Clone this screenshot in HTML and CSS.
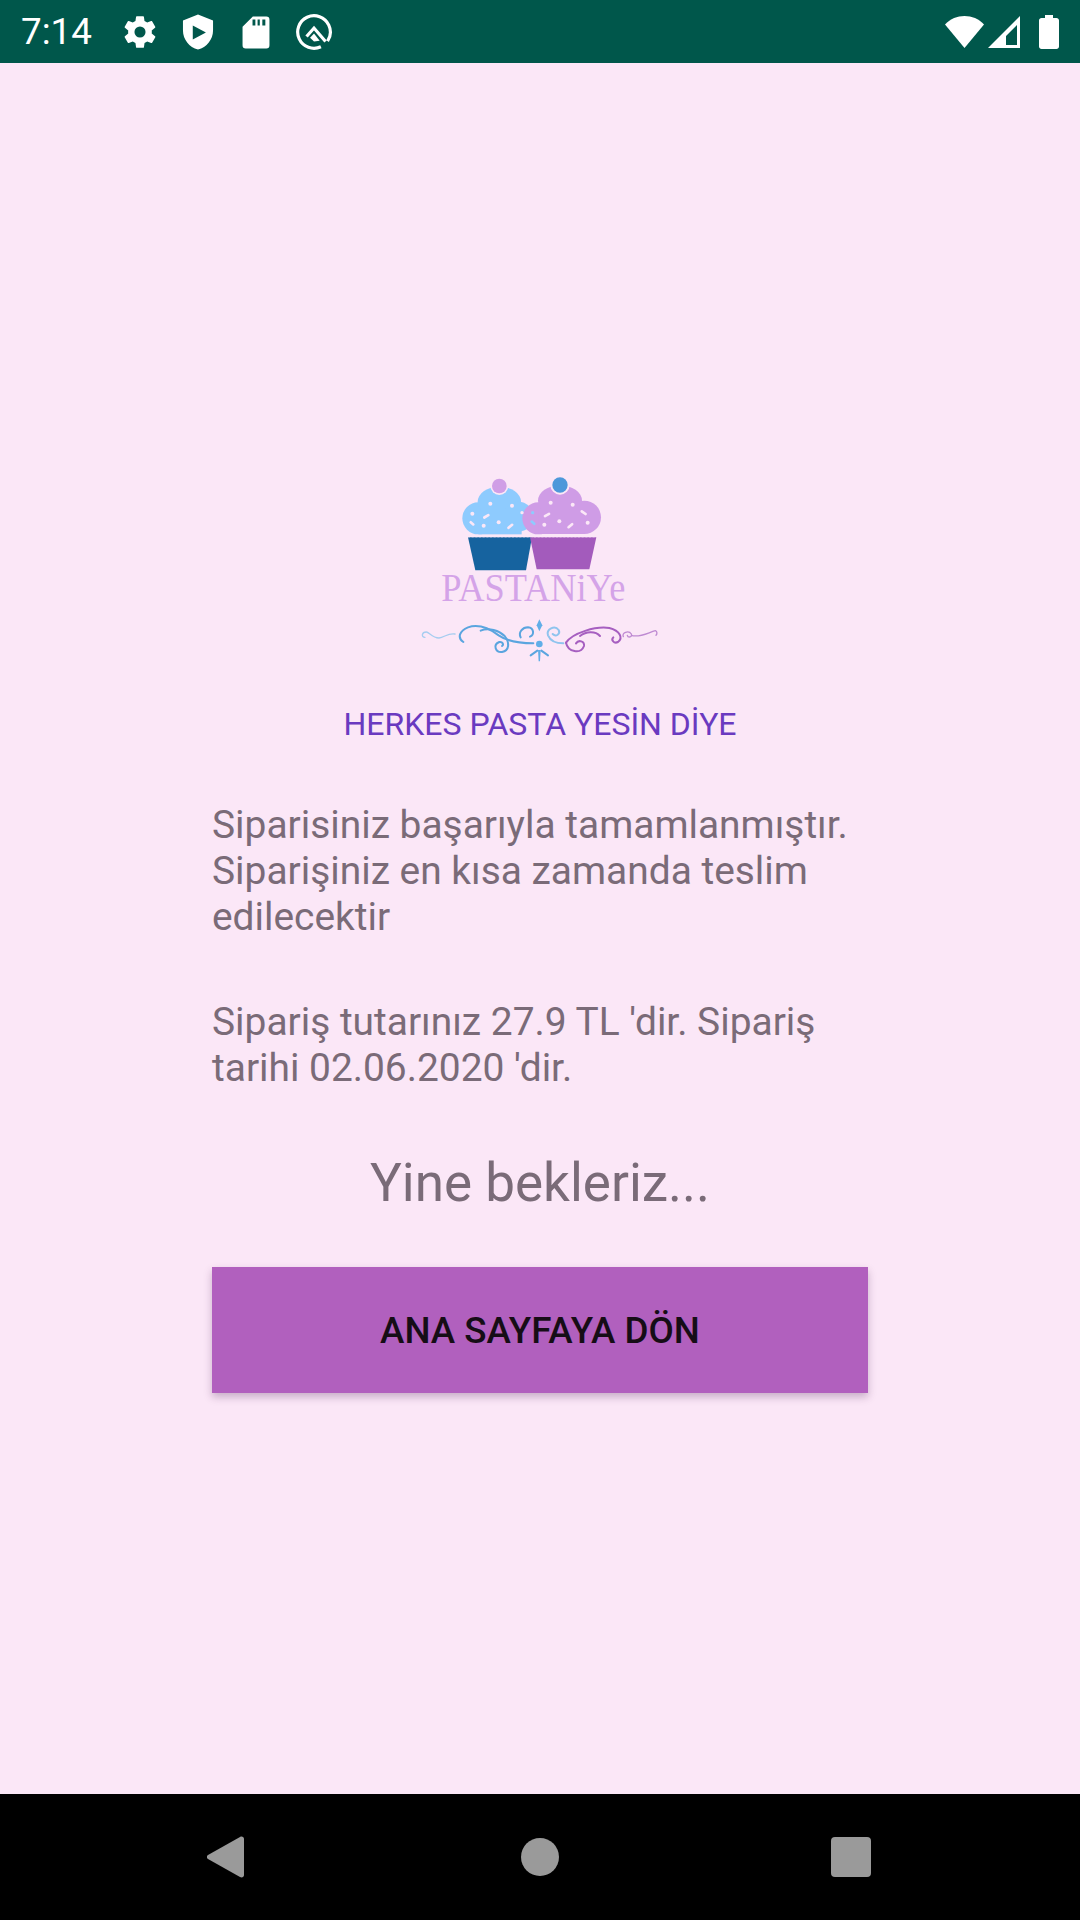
FILE: index.html
```html
<!DOCTYPE html>
<html lang="tr">
<head>
<meta charset="utf-8">
<title>Pastaniye</title>
<link rel="stylesheet" href="styles.css">
</head>
<body>
<div class="screen">
  <header class="status">
    <span class="time">7:14</span>
    <div class="status-left">
      <svg class="ic" viewBox="0 0 24 24"><path fill="#fff" d="M19.4 13c.04-.33.06-.66.06-1s-.02-.67-.06-1l2.1-1.65c.2-.15.25-.42.13-.64l-2-3.46c-.12-.22-.39-.3-.61-.22l-2.49 1c-.52-.4-1.08-.73-1.69-.98l-.38-2.65A.49.49 0 0 0 14 2h-4c-.25 0-.46.18-.49.42l-.38 2.65c-.61.25-1.17.59-1.69.98l-2.49-1a.5.5 0 0 0-.61.22l-2 3.46c-.13.22-.07.49.12.64L4.57 11c-.04.33-.07.67-.07 1s.03.67.07 1l-2.11 1.65c-.19.15-.25.42-.12.64l2 3.46c.12.22.39.3.61.22l2.49-1c.52.4 1.08.73 1.69.98l.38 2.65c.03.24.24.42.49.42h4c.25 0 .46-.18.49-.42l.38-2.65c.61-.25 1.17-.59 1.69-.98l2.49 1c.22.08.49 0 .61-.22l2-3.46c.12-.22.07-.49-.13-.64L19.4 13zM12 15.5a3.5 3.5 0 1 1 0-7 3.500 3.500 0 0 1 0 7z"/></svg>
      <svg class="ic" viewBox="0 0 24 24"><path fill="#fff" fill-rule="evenodd" d="M12 1 2.500 4.700v6.300c0 5.600 4 10.700 9.500 12 5.500-1.300 9.500-6.400 9.500-12V4.700L12 1zM8.700 7.900 17 12.300 8.700 16.700z"/></svg>
      <svg class="ic" viewBox="0 0 24 24"><path fill="#fff" fill-rule="evenodd" d="M10 2.200h8.500a2 2 0 0 1 2 2v16.200a2 2 0 0 1-2 2h-13a2 2 0 0 1-2-2V8.700zM9.800 4.100v3.800h1.800V4.100zM13 4.100v3.800h1.400V4.100zM16 4.100v3.800h1.900V4.100z"/></svg>
      <svg class="ic" viewBox="0 0 24 24">
        <circle cx="12" cy="12" r="10.300" fill="none" stroke="#fff" stroke-width="2" stroke-dasharray="58.700 6" transform="rotate(65 12 12)"/>
        <path fill="none" stroke="#fff" stroke-width="2" d="M7.300 14.800 12 9.500 19.300 18"/>
        <path fill="#fff" d="M9.500 15.600 12 13l3.600 4.600L12 18z"/>
      </svg>
    </div>
    <div class="status-right">
      <svg class="ic-wifi" viewBox="0 0 40 33"><path fill="#fff" d="M0 9.500C5.400 3.800 12.300 1 19.500 1S33.800 3.800 39 9.500L19.500 33z"/></svg>
      <svg class="ic-signal" viewBox="0 0 33 33"><path fill="#fff" fill-rule="evenodd" d="M32 1v32H0zM29 10 18 21v9h11z"/></svg>
      <svg class="ic-batt" viewBox="0 0 20 34"><path fill="#fff" d="M6 0h8v3h3.500c1.300 0 2.500 1 2.500 2.500V31.500c0 1.400-1.200 2.500-2.500 2.500h-15C1.200 34 0 32.900 0 31.500V5.500C0 4 1.200 3 2.500 3H6z"/></svg>
    </div>
  </header>

  <main class="content">
    <svg class="logo" viewBox="0 0 840 630" role="img" aria-label="Pastaniye">
      <g fill="#8ECBFE">
        <circle cx="235" cy="175" r="48"/><ellipse cx="298" cy="125" rx="65" ry="45"/><circle cx="355" cy="170" r="45"/>
        <rect x="235" y="150" width="130" height="73"/>
      </g>
      <circle cx="298" cy="78" r="27" fill="#FBE7F7"/><circle cx="298" cy="78" r="22" fill="#D09EE6"/>
      <path fill="#16639F" d="M204 232H396L378 331H226z"/>
      <g fill="#CF9CE6">
        <circle cx="415" cy="175" r="48"/><ellipse cx="480" cy="122" rx="66" ry="46"/><circle cx="553" cy="172" r="50"/>
        <rect x="415" y="150" width="138" height="72"/>
      </g>
      <circle cx="480" cy="75" r="29" fill="#FBE7F7"/><circle cx="480" cy="75" r="23" fill="#4D98DA"/>
      <path fill="#A35BBC" d="M390 232H589L568 328H410z"/>
      <path fill="none" stroke="#FBE7F7" stroke-width="4" stroke-dasharray="6 5" d="M204 230H589"/>
      <g fill="#FBE7F7">
        <circle cx="271" cy="131" r="6"/><circle cx="336" cy="137" r="6"/><circle cx="217" cy="161" r="6"/><circle cx="296" cy="187" r="6"/><circle cx="251" cy="197" r="6"/><circle cx="366" cy="158" r="5"/>
        <rect x="248" y="165" width="22" height="8" rx="4" transform="rotate(-30 259 169)"/><rect x="320" y="195" width="22" height="8" rx="4" transform="rotate(-40 331 199)"/><rect x="207" y="186" width="18" height="8" rx="4" transform="rotate(40 216 190)"/>
        <circle cx="452" cy="128" r="6"/><circle cx="518" cy="134" r="6"/><circle cx="478" cy="184" r="6"/><circle cx="563" cy="188" r="6"/><circle cx="433" cy="194" r="6"/>
        <rect x="430" y="161" width="22" height="8" rx="4" transform="rotate(-30 441 165)"/><rect x="540" y="154" width="22" height="8" rx="4" transform="rotate(35 551 158)"/><rect x="500" y="193" width="22" height="8" rx="4" transform="rotate(-40 511 197)"/>
      </g>
      <g fill="#8ECBFE"><circle cx="398" cy="158" r="5"/><rect x="390" y="184" width="18" height="8" rx="4" transform="rotate(40 399 188)"/></g>
      <text class="logo-text" x="124" y="422" textLength="552" lengthAdjust="spacingAndGlyphs">PASTANiYe</text>
      <g fill="none" stroke-linecap="round">
        <g stroke="#5AA5DF" stroke-width="6">
          <path stroke="#A6CDF0" stroke-width="4" d="M165 522c-20-4-32 10-48 12-20 0-30-18-38-18-14 0-16 16-4 16"/>
          <path d="M190 546c-20-14-10-34 14-44 30-10 60 0 92 24 20 14 50 24 104 24"/>
          <path d="M242 512c24-10 56 0 72 16 16 20 14 44-8 48-20 2-28-22-8-30 10-2 14 8 8 12"/>
          <path d="M362 532c-8-16 6-30 22-30 18 2 20 22 6 28"/>
          <path stroke="#8FC4EE" d="M490 550c-24 0-40-10-46-24-6-18 20-32 32-16 6 12-8 22-18 12"/>
          <path d="M412 572l-20 14M424 572l20 14"/>
        </g>
        <g stroke="#A65FC0" stroke-width="6">
          <path d="M498 548c20-30 90-50 130-44 32 8 42 30 26 42-12 6-22-6-14-14"/>
          <path d="M498 548c6 28 44 36 54 10 2-14-16-20-24-8"/>
          <path d="M540 528c18-14 46-16 60 0"/>
          <path stroke="#BE8AD2" stroke-width="4" d="M670 530c-6-12 16-20 24-8 4 10-10 12-12 4M694 526c24 8 50-8 72-14 6 2 6 10 2 14"/>
        </g>
      </g>
      <g fill="#60AEE8">
        <path d="M418 478l9 18-9 18-8-18z"/><circle cx="418" cy="552" r="10"/><path d="M414 570h8l-2 34h-4z"/>
      </g>
    </svg>
    <p class="tagline">HERKES PASTA YESİN DİYE</p>
    <p class="message first">Siparisiniz başarıyla tamamlanmıştır. Siparişiniz en kısa zamanda teslim edilecektir</p>
    <p class="message second">Sipariş tutarınız 27.9 TL 'dir. Sipariş tarihi 02.06.2020 'dir.</p>
    <p class="farewell">Yine bekleriz...</p>
    <button class="home" type="button">ANA SAYFAYA DÖN</button>
  </main>

  <nav class="navbar">
    <svg class="nav-back" viewBox="0 0 38 42"><path fill="#9A9A9A" d="M1 19 33 1c2-1 4 0 4 2v36c0 2-2 3-4 2L1 23c-1.500-1-1.500-3 0-4z"/></svg>
    <span class="nav-home"></span>
    <span class="nav-recent"></span>
  </nav>
</div>
</body>
</html>
```

FILE: styles.css
```css
* { box-sizing: border-box; }
html, body { margin: 0; padding: 0; }
body { font-family: Roboto, "Noto Sans", sans-serif; }

.screen {
  width: 1080px;
  height: 1920px;
  display: flex;
  flex-direction: column;
  background: #FBE7F7;
  overflow: hidden;
}

.status {
  height: 63px;
  flex: none;
  background: #00574B;
  color: #fff;
  display: flex;
  align-items: center;
  padding: 0 0 0 21px;
}
.time { font-size: 36.75px; width: 100px; }
.status-left { display: flex; align-items: center; gap: 20px; }
.ic { width: 38px; height: 38px; display: block; }
.status-right { margin-left: auto; display: flex; align-items: center; padding-right: 21px; }
.ic-wifi { width: 40px; height: 33px; margin-right: 3px; display: block; }
.ic-signal { width: 33px; height: 33px; margin-right: 18px; display: block; }
.ic-batt { width: 20px; height: 34px; display: block; }

.content {
  flex: 1;
  display: flex;
  flex-direction: column;
  align-items: center;
  padding-top: 397px;
}
.logo { width: 280px; height: 210px; display: block; }
.logo-text {
  font-family: "Liberation Serif", serif;
  font-size: 120px;
  fill: #D4A3E8;
}
.tagline {
  margin: 34px 0 0;
  font-size: 32px;
  line-height: 40px;
  color: #6A3AC0;
}
.message {
  width: 656px;
  margin: 0;
  font-size: 38.9px;
  line-height: 46px;
  color: #7A6B78;
}
.message.first { margin-top: 58px; }
.message.second { margin-top: 59px; }
.farewell {
  margin: 57px 0 0;
  font-size: 53px;
  line-height: 70px;
  color: #7A6B78;
}
.home {
  width: 656px;
  height: 126px;
  margin-top: 49px;
  border: 0;
  border-radius: 0;
  background: #B160BE;
  color: #160D16;
  font-family: Roboto, sans-serif;
  font-size: 36.75px;
  font-weight: 500;
  box-shadow: 0 4px 8px rgba(70, 30, 80, 0.28);
}

.navbar {
  height: 126px;
  flex: none;
  background: #000;
  position: relative;
}
.nav-back { position: absolute; left: 207px; top: 42px; width: 38px; height: 42px; }
.nav-home { position: absolute; left: 521px; top: 44px; width: 38px; height: 38px; border-radius: 50%; background: #9A9A9A; }
.nav-recent { position: absolute; left: 831px; top: 43px; width: 40px; height: 40px; border-radius: 4px; background: #9A9A9A; }
```
